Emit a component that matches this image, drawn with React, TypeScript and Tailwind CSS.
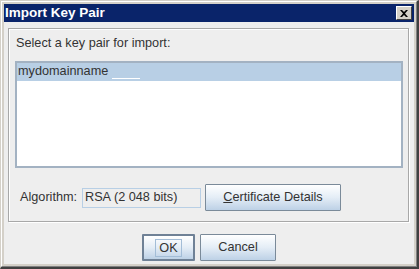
import React from 'react';

const font = { fontFamily: '"Liberation Sans", Arial, sans-serif' };

function OceanButton({ children, wide, focused }: { children: React.ReactNode; wide?: string; focused?: boolean }) {
  return (
    <button
      className={`h-[27px] ${wide} flex items-center justify-center rounded-[1px] bg-gradient-to-b from-white via-[#e4edf6] to-[#bdd1e6] text-[12.7px] text-[#333333] ${
        focused ? 'border-2 border-[#6f8196]' : 'border border-[#7a8a99]'
      }`}
    >
      {children}
    </button>
  );
}

export default function App() {
  return (
    <div className="w-[419px] h-[269px] overflow-hidden" style={font}>
      {/* window frame */}
      <div className="w-full h-full border-t border-l border-[#d4d0c8] border-r-[2px] border-b-[2px] border-r-[#404040] border-b-[#404040]">
        <div className="w-full h-full border-t border-l border-white border-r border-b border-r-[#808080] border-b-[#808080] bg-[#d4d0c8] p-[2px] flex flex-col">
          {/* title bar */}
          <div className="h-[18px] bg-[#0a246a] flex items-center justify-between pl-[1px] pr-[2px]">
            <span className="text-white font-bold text-[13.5px] leading-none">Import Key Pair</span>
            <div className="w-[16px] h-[14px] bg-[#d4d0c8] border-t border-l border-white border-r border-b border-r-[#404040] border-b-[#404040] flex items-center justify-center">
              <svg width="8" height="7" viewBox="0 0 8 7">
                <path d="M0 0h2l2 2 2-2h2L5 3.5 8 7H6L4 5 2 7H0l3-3.5z" fill="#000" />
              </svg>
            </div>
          </div>

          {/* body */}
          <div className="flex-1 bg-[#eeeeee] px-[4px] pt-[6px] flex flex-col">
            {/* etched panel */}
            <div className="border border-[#a8a8a8] shadow-[1px_1px_0_#ffffff,inset_1px_1px_0_#ffffff] pl-[6px] pr-[5px] pt-[7px] pb-[10px] flex flex-col mr-[1px]">
              <div className="h-[15px] leading-[15px] text-[12.7px] text-[#333333] pl-[1px]">Select a key pair for import:</div>
              <div className="mt-[10px] h-[107px] border-2 border-[#a3b2c2] bg-white">
                <div className="relative h-[18px] bg-[#b8cfe5] pl-[1px] flex items-center text-[12.7px] text-[#333333]">
                  mydomainname
                  <div className="absolute left-[95px] top-[15px] w-[28px] h-[1px] bg-white" />
                </div>
              </div>
              <div className="mt-[16px] h-[27px] flex items-center">
                <span className="ml-[5px] w-[62px] text-[12.7px] text-[#333333]">Algorithm:</span>
                <div className="w-[119px] h-[20px] border border-[#b8cfe5] bg-[#eeeeee] flex items-center pl-[2px] text-[12.7px] text-[#333333]">
                  RSA (2 048 bits)
                </div>
                <div className="ml-[4px]">
                  <OceanButton wide="w-[136px]">
                    <span>
                      <span className="underline">C</span>ertificate Details
                    </span>
                  </OceanButton>
                </div>
              </div>
            </div>

            {/* buttons */}
            <div className="mt-[12px] flex justify-center gap-[5px]">
              <OceanButton wide="w-[53px]" focused>
                <span className="border border-[#a3bdd7] px-[3px] leading-[16px]">OK</span>
              </OceanButton>
              <OceanButton wide="w-[76px]">Cancel</OceanButton>
            </div>
          </div>
        </div>
      </div>
    </div>
  );
}
